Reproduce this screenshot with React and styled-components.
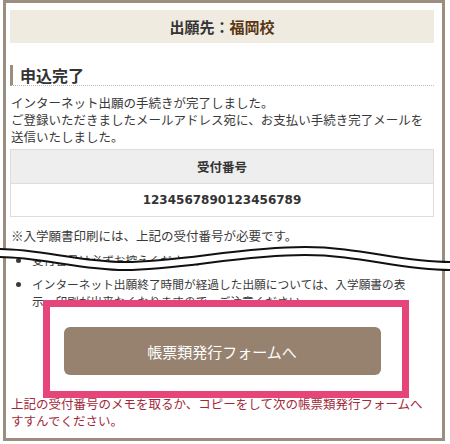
import React from 'react';
import styled, { createGlobalStyle } from 'styled-components';

const GlobalStyle = createGlobalStyle`
  html, body {
    margin: 0;
    padding: 0;
    background: #ffffff;
  }
  body {
    font-family: "Noto Sans CJK JP", "Noto Sans", sans-serif;
    color: #3a3a3a;
  }
`;

const Page = styled.div`
  position: relative;
  width: 450px;
  height: 444px;
  overflow: hidden;
`;

const Frame = styled.div`
  box-sizing: border-box;
  width: 442px;
  height: 441px;
  margin-left: 3px;
  border: 3px solid #9b8e80;
  padding: 7px 8px 0 4px;
`;

const TitleBar = styled.div`
  height: 33px;
  line-height: 33px;
  background: #f0ebe1;
  text-align: center;
  font-size: 15px;
  font-weight: 700;
  color: #333333;
`;

const Place = styled.span`
  color: #5a3614;
`;

const SectionHeading = styled.h2`
  margin: 22px 0 0;
  height: 20px;
  line-height: 20px;
  padding-left: 7px;
  border-left: 3px solid #9b8e80;
  border-bottom: 1px dotted #b9b9b9;
  font-size: 16px;
  font-weight: 700;
  color: #333333;
`;

const Text = styled.p`
  margin: ${(p) => p.$mt || 0}px 0 0;
  padding-left: 1px;
  font-size: 12.5px;
  line-height: 17px;
  color: ${(p) => p.$color || '#3a3a3a'};
`;

const Table = styled.table`
  width: 100%;
  margin-top: 4px;
  border-collapse: collapse;
`;

const HeadCell = styled.th`
  height: 33px;
  padding: 0;
  background: #eeeeee;
  border: 1px solid #dddddd;
  font-size: 12.5px;
  font-weight: 700;
  color: #333333;
`;

const NumberCell = styled.td`
  height: 32px;
  padding: 0;
  border: 1px solid #dddddd;
  text-align: center;
  font-family: "DejaVu Sans", "Noto Sans CJK JP", sans-serif;
  font-size: 12px;
  font-weight: 700;
  color: #333333;
`;

const Notes = styled.ul`
  margin: 7px 0 0;
  padding: 0 22px 0 22px;
  list-style: disc;
`;

const Note = styled.li`
  margin-top: ${(p) => p.$mt || 0}px;
  font-size: 11.7px;
  line-height: 17px;
  color: #3a3a3a;
`;

const ButtonArea = styled.div`
  position: relative;
  width: 317px;
  margin: 18px auto 0;
`;

const FormButton = styled.button`
  display: block;
  width: 317px;
  height: 48px;
  border: none;
  border-radius: 6px;
  background: #978270;
  color: #ffffff;
  font-family: "Noto Sans CJK JP", sans-serif;
  font-size: 15px;
  cursor: pointer;
`;

const Highlight = styled.div`
  position: absolute;
  left: -21px;
  right: -28px;
  top: -27px;
  bottom: -23px;
  border: 7px solid #e6457a;
  pointer-events: none;
`;

const TearOverlay = styled.svg`
  position: absolute;
  left: 0;
  top: 240px;
  width: 450px;
  height: 40px;
  pointer-events: none;
`;

const topEdge = 'M0,9 C40,9 80,22 125,22 C180,22 240,7 305,7 C360,7 400,22 450,22';
const bottomEdge = 'M0,17 C40,17 80,30 125,30 C180,30 240,15 305,15 C360,15 400,30 450,30';
const gapShape =
  'M0,9 C40,9 80,22 125,22 C180,22 240,7 305,7 C360,7 400,22 450,22 ' +
  'L450,30 C400,30 360,15 305,15 C240,15 180,30 125,30 C80,30 40,17 0,17 Z';

const Tear = () => (
  <TearOverlay viewBox="0 0 450 40">
    <path d={gapShape} fill="#ffffff" />
    <path d={topEdge} fill="none" stroke="#111111" strokeWidth="2" />
    <path d={bottomEdge} fill="none" stroke="#111111" strokeWidth="2" />
  </TearOverlay>
);

const App = () => {
  return (
    <Page>
      <GlobalStyle />
      <Frame>
        <TitleBar>
          出願先：<Place>福岡校</Place>
        </TitleBar>

        <SectionHeading>申込完了</SectionHeading>

        <Text $mt={8}>インターネット出願の手続きが完了しました。</Text>
        <Text>ご登録いただきましたメールアドレス宛に、お支払い手続き完了メールを送信いたしました。</Text>

        <Table>
          <thead>
            <tr>
              <HeadCell>受付番号</HeadCell>
            </tr>
          </thead>
          <tbody>
            <tr>
              <NumberCell>1234567890123456789</NumberCell>
            </tr>
          </tbody>
        </Table>

        <Text $mt={10}>※入学願書印刷には、上記の受付番号が必要です。</Text>

        <Notes>
          <Note>受付番号は必ずお控えください。</Note>
          <Note $mt={7}>
            インターネット出願終了時間が経過した出願については、入学願書の表示・印刷が出来なくなりますので、ご注意ください。
          </Note>
        </Notes>

        <ButtonArea>
          <FormButton type="button">帳票類発行フォームへ</FormButton>
          <Highlight />
        </ButtonArea>

        <Text $mt={20} $color="#a2293a">
          上記の受付番号のメモを取るか、コピーをして次の帳票類発行フォームへすすんでください。
        </Text>
      </Frame>
      <Tear />
    </Page>
  );
};

export default App;
